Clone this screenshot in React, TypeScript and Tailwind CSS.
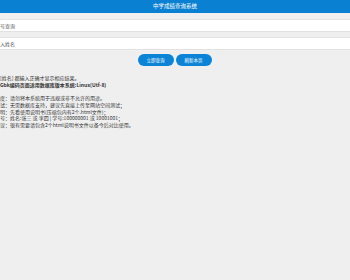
import React from "react";

export default function App() {
  const notes = [
    "度：请勿将本系统用于违规或非不允许的用途。",
    "试：无需数据库支持，建议先直接上传至网站空间测试；",
    "明：先看使用说明书(压缩包内有2个.html文件)；",
    "号：姓名:张三 或 李四 | 学号:100000001 或 10001001；",
    "议：很有需要请包含2个html说明书文件以备今后对比使用。",
  ];

  return (
    <div
      className="w-[350px] h-[280px] overflow-hidden bg-[#efefef] text-[#333]"
      style={{ fontFamily: '"Noto Sans CJK SC", "Liberation Sans", sans-serif' }}
    >
      {/* Header */}
      <div className="h-[13px] bg-[#0a80d2] flex items-center justify-center">
        <span className="text-[5.5px] leading-none text-white">中学成绩查询系统</span>
      </div>

      {/* Inputs */}
      <div className="pt-[6px] flex flex-col gap-[5px]">
        <div className="h-[13px] bg-white border-y border-[#e2e2e2] flex items-center">
          <span className="text-[5px] leading-none text-[#555]">号查询</span>
        </div>
        <div className="h-[13px] bg-white border-y border-[#e2e2e2] flex items-center">
          <span className="text-[5px] leading-none text-[#555]">入姓名</span>
        </div>
      </div>

      {/* Buttons */}
      <div className="mt-[4px] flex justify-center gap-[2px] -ml-[1px]">
        <button className="w-[36px] h-[12px] rounded-full bg-[#0b83d6] text-white text-[4.5px] leading-none">
          立即查询
        </button>
        <button className="w-[36px] h-[12px] rounded-full bg-[#0b83d6] text-white text-[4.5px] leading-none">
          刷新本页
        </button>
      </div>

      {/* Notes */}
      <div className="mt-[9px] text-[5px] leading-[6.7px]">
        <p>[姓名] 都输入正确才显示相应结果。</p>
        <p className="font-bold">Gbk编码页面适用数据库版本系统:Linux(Utf-8)</p>
        <p className="h-[6.7px]"></p>
        {notes.map((n) => (
          <p key={n}>{n}</p>
        ))}
      </div>
    </div>
  );
}
